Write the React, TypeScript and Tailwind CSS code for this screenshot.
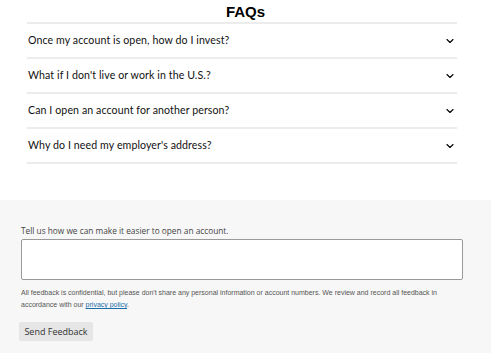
import { ChevronDown } from "lucide-react";

const faqs = [
  "Once my account is open, how do I invest?",
  "What if I don't live or work in the U.S.?",
  "Can I open an account for another person?",
  "Why do I need my employer's address?",
];

export default function App() {
  return (
    <div className="h-[353px] w-[491px] overflow-hidden bg-white">
      <section className="px-[27px]">
        <h2 className="h-[22px] pt-[3px] text-center font-['Liberation_Sans',sans-serif] text-[15px] font-bold leading-[18px] text-black">
          FAQs
        </h2>
        <div className="w-[430px] border-t-2 border-[#ececec]">
          {faqs.map((q) => (
            <FaqRow key={q} question={q} />
          ))}
        </div>
      </section>

      <section className="mt-[36px] h-[153px] bg-[#f7f7f7] px-[21px] pt-[24px]">
        <label className="block font-['Open_Sans',sans-serif] text-[8.3px] leading-[14px] text-[#444]">
          Tell us how we can make it easier to open an account.
        </label>
        <textarea className="mt-[1px] block h-[41px] w-[442px] resize-none rounded-[2px] border border-[#999] bg-white" />
        <p className="mt-[7px] font-['Liberation_Sans',sans-serif] text-[7px] leading-[12px] text-[#555]">
          All feedback is confidential, but please don't share any personal information or account numbers. We review and record all feedback in
          accordance with our{" "}
          <a href="#" className="text-[#1a6fa8] underline">
            privacy policy
          </a>
          .
        </p>
        <button className="-ml-[2px] mt-[11px] h-[19px] w-[74px] rounded-[2px] bg-[#e6e6e6] font-['Open_Sans',sans-serif] text-[9px] text-[#333]">
          Send Feedback
        </button>
      </section>
    </div>
  );
}

function FaqRow({ question }: { question: string }) {
  return (
    <div className="flex h-[35px] items-center justify-between border-b-2 border-[#ececec] pl-[1px] pr-[1px]">
      <span className="font-['Lato',sans-serif] text-[10.6px] tracking-[0.1px] text-[#111]">{question}</span>
      <ChevronDown className="h-[12px] w-[12px] text-black" strokeWidth={2.2} />
    </div>
  );
}
